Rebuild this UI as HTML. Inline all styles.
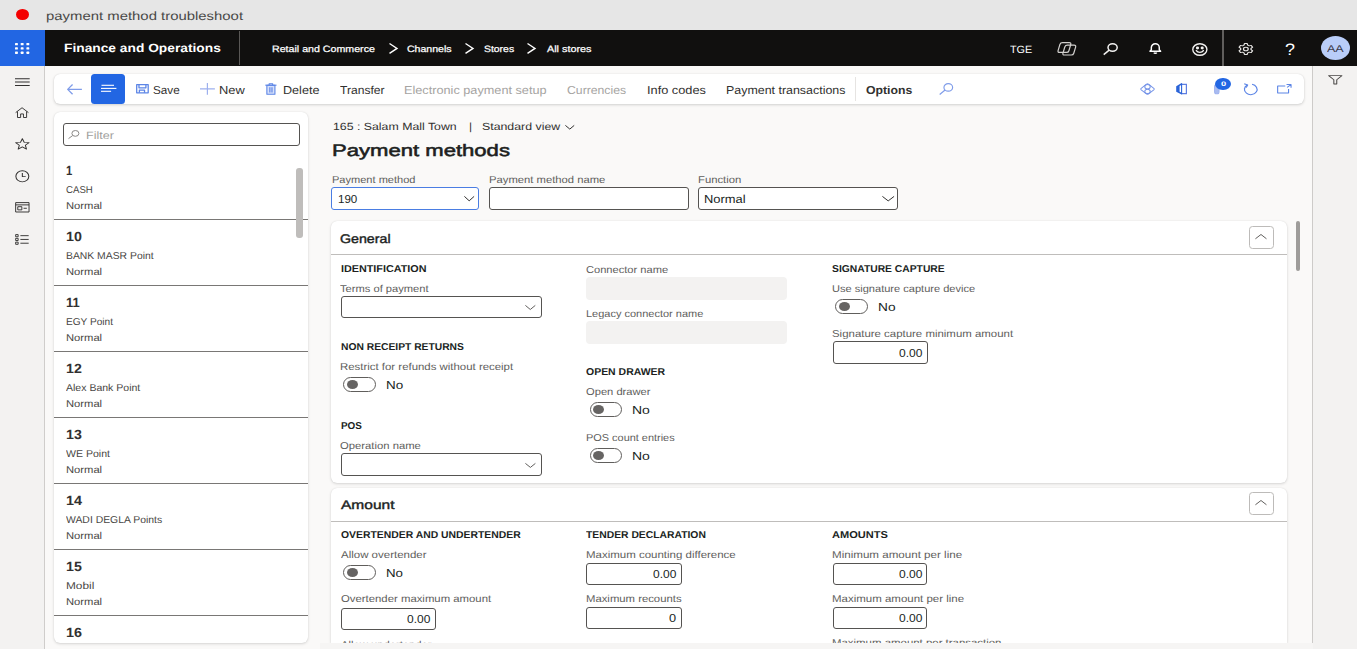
<!DOCTYPE html>
<html lang="en"><head><meta charset="utf-8"><title>payment method troubleshoot</title>
<style>
html,body{margin:0;padding:0;}
body{width:1357px;height:649px;overflow:hidden;position:relative;background:#faf9f8;font-family:"Liberation Sans", sans-serif;}
.t{position:absolute;white-space:pre;transform-origin:0 0;text-rendering:geometricPrecision;}
.a{position:absolute;box-sizing:border-box;}
svg{position:absolute;overflow:visible;}
.tg{width:32.8px;height:14.9px;border:1.4px solid #605e5c;border-radius:7.5px;background:#fff;}
.kn{width:11px;height:8.9px;border-radius:50%;background:#666463;}
.in{border:1px solid #555351;border-radius:3px;background:#fff;}
.ro{background:#f3f2f1;border-radius:4px;}
.card{background:#fff;border-radius:6px;box-shadow:0 1px 3px rgba(0,0,0,.14),0 0 1px rgba(0,0,0,.12);}
.hl{height:1px;background:#bfbdbb;}
.li{left:54px;width:254px;height:1px;background:#797775;}
</style></head><body>
<!-- title bar -->
<div class="a " style="left:0px;top:0px;width:1357.0px;height:30.0px;background:#e6e6e6;"></div>
<div class="a " style="left:16.3px;top:8.8px;width:13.0px;height:11.3px;border-radius:50%;background:#f40000;"></div>
<!-- nav bar -->
<div class="a " style="left:0px;top:30px;width:1357.0px;height:35.5px;background:#11100f;"></div>
<div class="a " style="left:0px;top:30px;width:45.0px;height:35.5px;background:#2266e3;"></div>
<svg style="left:15px;top:43px" width="14.3" height="10.9" viewBox="0 0 14.3 10.9"><g fill="#fff"><rect x="0" y="0" width="2.9" height="2.3" rx="0.6"/><rect x="0" y="4.3" width="2.9" height="2.3" rx="0.6"/><rect x="0" y="8.6" width="2.9" height="2.3" rx="0.6"/><rect x="5.7" y="0" width="2.9" height="2.3" rx="0.6"/><rect x="5.7" y="4.3" width="2.9" height="2.3" rx="0.6"/><rect x="5.7" y="8.6" width="2.9" height="2.3" rx="0.6"/><rect x="11.4" y="0" width="2.9" height="2.3" rx="0.6"/><rect x="11.4" y="4.3" width="2.9" height="2.3" rx="0.6"/><rect x="11.4" y="8.6" width="2.9" height="2.3" rx="0.6"/></g></svg>
<div class="a " style="left:239px;top:31px;width:1.2px;height:33.5px;background:#5a5856;"></div>
<!-- breadcrumb chevrons -->
<svg style="left:388.5px;top:43.2px" width="8.5" height="10.8" viewBox="0 0 8.5 10.8"><path d="M0.5 0.5 L8.0 5.4 L0.5 10.3" fill="none" stroke="#fff" stroke-width="1.4"/></svg>
<svg style="left:465px;top:43.2px" width="8.5" height="10.8" viewBox="0 0 8.5 10.8"><path d="M0.5 0.5 L8.0 5.4 L0.5 10.3" fill="none" stroke="#fff" stroke-width="1.4"/></svg>
<svg style="left:527px;top:43.2px" width="8.5" height="10.8" viewBox="0 0 8.5 10.8"><path d="M0.5 0.5 L8.0 5.4 L0.5 10.3" fill="none" stroke="#fff" stroke-width="1.4"/></svg>
<!-- nav right icons -->
<svg style="left:1056.7px;top:42.2px" width="19.5" height="13.7" viewBox="0 0 20 14" preserveAspectRatio="none"><g fill="none" stroke="#d2d0ce" stroke-width="1.25" vector-effect="non-scaling-stroke" stroke-linejoin="round"><path d="M5.6 0.7 H12.6 Q14.6 0.7 14.1 2.6 L12.2 8.9 Q11.7 10.7 9.7 10.7 H2.6 Q0.6 10.7 1.1 8.8 L3 2.5 Q3.6 0.7 5.6 0.7Z"/><path d="M10.6 3.3 H17.6 Q19.6 3.3 19.1 5.2 L17.2 11.5 Q16.7 13.3 14.7 13.3 H7.6 Q5.6 13.3 6.1 11.4 L8 5.1 Q8.6 3.3 10.6 3.3Z"/></g></svg>
<svg style="left:1103.4px;top:43px" width="15.0" height="12.1" viewBox="0 0 15 12" preserveAspectRatio="none"><g fill="none" stroke="#f3f2f1" stroke-width="1.5" vector-effect="non-scaling-stroke" stroke-linejoin="round"><ellipse cx="9.6" cy="4.4" rx="4.6" ry="3.7"/><path d="M6.2 7 L0.7 11.5"/></g></svg>
<svg style="left:1149.2px;top:43.3px" width="12.6" height="11.0" viewBox="0 0 13 11" preserveAspectRatio="none"><g fill="none" stroke="#fff" stroke-width="1.5" vector-effect="non-scaling-stroke" stroke-linejoin="round"><path d="M1 8.3 L2.4 6.8 V4.4 a4.1 3.6 0 0 1 8.2 0 V6.8 L12 8.3 Z"/><path d="M5 9.6 a1.6 1.1 0 0 0 3 0"/></g></svg>
<svg style="left:1192.1px;top:42.6px" width="15.7" height="13.0" viewBox="0 0 16 13" preserveAspectRatio="none"><g fill="none" stroke="#f3f2f1" stroke-width="1.4" vector-effect="non-scaling-stroke" stroke-linejoin="round"><ellipse cx="8" cy="6.5" rx="7.2" ry="5.8"/><path d="M4.4 7.6 a4 3.2 0 0 0 7.2 0" stroke-linecap="round"/><ellipse cx="5.6" cy="5" rx="0.9" ry="0.7" fill="#fff"/><ellipse cx="10.4" cy="5" rx="0.9" ry="0.7" fill="#fff"/></g></svg>
<div class="a " style="left:1222.3px;top:30px;width:1.5px;height:35.5px;background:#605e5c;"></div>
<svg style="left:1238.2px;top:43.1px" width="15.7" height="12.0" viewBox="0 0 16 16" preserveAspectRatio="none"><g fill="none" stroke="#e8e6e4" stroke-width="1.3" vector-effect="non-scaling-stroke" stroke-linejoin="round"><circle cx="8" cy="8" r="2.4"/><path d="M6.6 0.8 h2.8 l.5 2.1 l1.5 .9 l2.1-.6 l1.4 2.4 l-1.6 1.5 v1.8 l1.6 1.5 l-1.4 2.4 l-2.1-.6 l-1.5 .9 l-.5 2.1 h-2.8 l-.5-2.1 l-1.5-.9 l-2.1 .6 l-1.4-2.4 l1.6-1.5 v-1.8 l-1.6-1.5 l1.4-2.4 l2.1 .6 l1.5-.9 z"/></g></svg>
<div class="a " style="left:1320.9px;top:35.8px;width:29.1px;height:24.0px;border-radius:50%;background:#b9cdf8;"></div>
<!-- left sidebar -->
<div class="a " style="left:0px;top:65.5px;width:45.4px;height:583.5px;background:#f3f2f1;border-right:1.4px solid #cfcdcb;"></div>
<!-- right filter pane -->
<div class="a " style="left:1312.3px;top:65.5px;width:44.7px;height:583.5px;background:#f3f2f1;border-left:1.8px solid #cdcbc9;"></div>
<svg style="left:14.6px;top:78.3px" width="14.7" height="8.2" viewBox="0 0 17 10" preserveAspectRatio="none"><g fill="none" stroke="#323130" stroke-width="1.2" vector-effect="non-scaling-stroke" stroke-linejoin="round"><path d="M0 0.8 H17 M0 5 H17 M0 9.2 H17"/></g></svg>
<svg style="left:15.2px;top:107px" width="14.1" height="11.1" viewBox="0 0 17 15" preserveAspectRatio="none"><g fill="none" stroke="#323130" stroke-width="1.2" vector-effect="non-scaling-stroke" stroke-linejoin="round"><path d="M0.8 7.6 L8.5 1 L16.2 7.6 M3 6 V14.2 H6.8 V9.4 H10.2 V14.2 H14 V6"/></g></svg>
<svg style="left:15.2px;top:138.3px" width="14.7" height="11.7" viewBox="0 0 17 16" preserveAspectRatio="none"><g fill="none" stroke="#323130" stroke-width="1.2" vector-effect="non-scaling-stroke" stroke-linejoin="round"><path d="M8.5 1 L10.7 6 L16.2 6.4 L12 9.9 L13.3 15.2 L8.5 12.3 L3.7 15.2 L5 9.9 L0.8 6.4 L6.3 6 Z"/></g></svg>
<svg style="left:15.2px;top:169.9px" width="14.7" height="12.6" viewBox="0 0 17 17" preserveAspectRatio="none"><g fill="none" stroke="#323130" stroke-width="1.2" vector-effect="non-scaling-stroke" stroke-linejoin="round"><circle cx="8.5" cy="8.5" r="7.5"/><path d="M8.5 4 V9 H12.4"/></g></svg>
<svg style="left:15.2px;top:202.4px" width="14.7" height="10.6" viewBox="0 0 18 14" preserveAspectRatio="none"><g fill="none" stroke="#323130" stroke-width="1.2" vector-effect="non-scaling-stroke" stroke-linejoin="round"><rect x="0.8" y="0.8" width="16.4" height="12.4"/><path d="M0.8 3.8 H17.2"/><rect x="3.4" y="6.2" width="5" height="4.2"/><path d="M10.5 8.3 H14.5"/></g></svg>
<svg style="left:15.2px;top:234.3px" width="14.1" height="10.9" viewBox="0 0 17 15" preserveAspectRatio="none"><g fill="none" stroke="#323130" stroke-width="1.2" vector-effect="non-scaling-stroke" stroke-linejoin="round"><rect x="0.8" y="0.8" width="3" height="3"/><rect x="0.8" y="6" width="3" height="3"/><rect x="0.8" y="11.2" width="3" height="3"/><path d="M6.5 2.3 H16.5 M6.5 7.5 H16.5 M6.5 12.7 H16.5"/></g></svg>
<svg style="left:1328.2px;top:75px" width="14.6" height="9.7" viewBox="0 0 15 11" preserveAspectRatio="none"><g fill="none" stroke="#484644" stroke-width="1.05" vector-effect="non-scaling-stroke" stroke-linejoin="round"><path d="M0.7 0.7 H14.3 L9 5.4 V10.3 H6 V5.4 Z"/></g></svg>
<!-- toolbar -->
<div class="a " style="left:53.5px;top:73.6px;width:1250.8px;height:30.4px;background:#fff;border-radius:6px;box-shadow:0 1px 3px rgba(0,0,0,.16),0 0 1px rgba(0,0,0,.12);"></div>
<svg style="left:66.5px;top:83.7px" width="14.9" height="10.7" viewBox="0 0 15 11" preserveAspectRatio="none"><g fill="none" stroke="#7f9ce9" stroke-width="1.3" vector-effect="non-scaling-stroke" stroke-linejoin="round"><path d="M5.6 0.5 L0.7 5.5 L5.6 10.5 M0.7 5.5 H15"/></g></svg>
<div class="a " style="left:91px;top:73.8px;width:34.0px;height:30.2px;background:#2266e3;border-radius:3.5px;"></div>
<svg style="left:100.5px;top:84px" width="16" height="9" viewBox="0 0 16 9"><g stroke="#fff" stroke-width="1.1"><path d="M0.5 1.3 H13"/><path d="M0 4.4 H15.4"/><path d="M0 7.3 H10.1"/></g></svg>
<svg style="left:136px;top:84.2px" width="12.9" height="9.5" viewBox="0 0 13 10" preserveAspectRatio="none"><g fill="none" stroke="#5c85e6" stroke-width="1.3" vector-effect="non-scaling-stroke" stroke-linejoin="round"><rect x="0.7" y="0.7" width="11.6" height="8.6"/><path d="M3 0.7 V4 H10 V0.7"/><path d="M3.4 9.3 V6.4 H8.6 V9.3"/></g></svg>
<svg style="left:199.6px;top:83.1px" width="14.9" height="11.7" viewBox="0 0 14.9 11.7"><path d="M7.4 0 V11.7 M0 5.8 H14.9" stroke="#9db0ee" stroke-width="1.2"/></svg>
<svg style="left:265.1px;top:82.9px" width="11.8" height="11.9" viewBox="0 0 12 12" preserveAspectRatio="none"><g fill="none" stroke="#5c85e6" stroke-width="1.1" vector-effect="non-scaling-stroke" stroke-linejoin="round"><path d="M1.9 2.2 V11.3 H10.1 V2.2 Z" fill="#d6e0fa"/><path d="M0.3 2.2 H11.7"/><path d="M4.2 2.2 V0.7 H7.8 V2.2"/><path d="M4.9 4.2 V9.6 M7.1 4.2 V9.6" stroke="#7d9ceb" stroke-width="1.6"/></g></svg>
<div class="a " style="left:854.5px;top:76.5px;width:1.2px;height:24.5px;background:#e6e4e2;"></div>
<svg style="left:938.8px;top:82.6px" width="14.5" height="12.0" viewBox="0 0 15 12" preserveAspectRatio="none"><g fill="none" stroke="#7f9ce9" stroke-width="1.2" vector-effect="non-scaling-stroke" stroke-linejoin="round"><ellipse cx="9.6" cy="4.4" rx="4.5" ry="3.7"/><path d="M6.3 7 L0.7 11.5"/></g></svg>
<svg style="left:1140.4px;top:82.7px" width="15.0" height="12.1" viewBox="0 0 16 14" preserveAspectRatio="none"><g fill="none" stroke="#7795e8" stroke-width="1.1" vector-effect="non-scaling-stroke" stroke-linejoin="round"><path d="M6.9 1.4 Q8 0.4 9.1 1.4 L14.7 6.1 Q15.7 7 14.7 7.9 L9.1 12.6 Q8 13.6 6.9 12.6 L1.3 7.9 Q0.3 7 1.3 6.1 Z"/><ellipse cx="8" cy="4.3" rx="2.9" ry="2.5"/><ellipse cx="8" cy="9.7" rx="2.9" ry="2.5"/></g></svg>
<svg style="left:1176.3px;top:83px" width="11.1" height="11.4" viewBox="0 0 11.1 11.4"><path d="M0.2 3.2 L5.6 0 V1.8 L3.6 2.9 V8.8 L5.6 9.8 V11.4 L0.2 8.8 Z" fill="#2a63d8"/><path d="M5.6 1.3 H10.4 V10.6 H5.6" fill="none" stroke="#5f7fe2" stroke-width="1.2"/><path d="M5.6 0.3 V11.2" stroke="#2a63d8" stroke-width="1.1"/></svg>
<svg style="left:1214px;top:84.1px" width="5.6" height="10.4" viewBox="0 0 6 10" preserveAspectRatio="none"><g fill="none" stroke="#9db1ee" stroke-width="1" vector-effect="non-scaling-stroke" stroke-linejoin="round"><rect x="0.6" y="0.6" width="4.8" height="8.8" rx="2" fill="#a9bbf0"/></g></svg>
<div class="a " style="left:1215px;top:77.8px;width:16.1px;height:12.6px;border-radius:50%;background:#2266e3;"></div>
<svg style="left:1242.9px;top:82.7px" width="15.1" height="12.4" viewBox="0 0 15 15" preserveAspectRatio="none"><g fill="none" stroke="#5c85e6" stroke-width="1.2" vector-effect="non-scaling-stroke" stroke-linejoin="round"><path d="M4.4 2.4 A6.3 6.3 0 1 0 9 1.6"/><path d="M1.2 1 L4.6 2.4 L3.2 5.6"/></g></svg>
<svg style="left:1277.2px;top:83.9px" width="14.7" height="9.5" viewBox="0 0 16 12" preserveAspectRatio="none"><g fill="none" stroke="#5c85e6" stroke-width="1.2" vector-effect="non-scaling-stroke" stroke-linejoin="round"><path d="M9 2.6 H0.7 V11.3 H12.6 V6.4"/><path d="M10.4 0.7 H15.3 V4.6 M15.3 0.7 L11 4.2"/></g></svg>
<!-- list card -->
<div class="a card" style="left:54px;top:112px;width:254.0px;height:530.6px;"></div>
<div class="a in" style="left:63px;top:123.3px;width:237.0px;height:22.4px;"></div>
<svg style="left:68.2px;top:130.2px" width="11.5" height="9" viewBox="0 0 11.5 9"><g fill="none" stroke="#8a8886" stroke-width="1"><ellipse cx="7.4" cy="3.4" rx="3.5" ry="2.9"/><path d="M4.6 5.6 L0.5 8.6"/></g></svg>
<div class="a li" style="top:219px;"></div>
<div class="a li" style="top:285px;"></div>
<div class="a li" style="top:351px;"></div>
<div class="a li" style="top:417px;"></div>
<div class="a li" style="top:483px;"></div>
<div class="a li" style="top:549px;"></div>
<div class="a li" style="top:615px;"></div>
<div class="a " style="left:296.4px;top:167.5px;width:6.5px;height:70.3px;background:#bfbdbb;border-radius:3px;"></div>
<!-- view chevron -->
<svg style="left:564.7px;top:125px" width="9.6" height="4.6" viewBox="0 0 9.6 4.6"><path d="M0.4 0.4 L4.8 4.1 L9.2 0.4" fill="none" stroke="#323130" stroke-width="1"/></svg>
<!-- top fields -->
<div class="a in" style="left:331.3px;top:187.4px;width:148.1px;height:22.3px;border:1.5px solid #4a7de3;"></div>
<svg style="left:463.7px;top:196.2px" width="10.5" height="5.3" viewBox="0 0 10.5 5.3"><path d="M0.4 0.4 L5.2 4.8 L10.1 0.4" fill="none" stroke="#323130" stroke-width="1"/></svg>
<div class="a in" style="left:489.3px;top:187.4px;width:200.2px;height:22.3px;"></div>
<div class="a in" style="left:698px;top:187.4px;width:200.2px;height:22.3px;"></div>
<svg style="left:881.5px;top:196.2px" width="12.5" height="5.4" viewBox="0 0 12.5 5.4"><path d="M0.4 0.4 L6.2 4.9 L12.1 0.4" fill="none" stroke="#323130" stroke-width="1"/></svg>
<!-- main scrollbar -->
<div class="a " style="left:1295.5px;top:220.8px;width:4.5px;height:49.8px;background:#9e9c9a;border-radius:2.2px;"></div>
<!-- General card -->
<div class="a card" style="left:331px;top:220.5px;width:956.0px;height:262.7px;"></div>
<div class="a hl" style="left:331px;top:254px;width:956.0px;height:1.0px;"></div>
<div class="a in" style="left:1249.4px;top:226.2px;width:24.4px;height:22.6px;border:1.3px solid #bdbbb9;border-radius:3.5px;"></div>
<svg style="left:1255.3px;top:233.8px" width="11.9" height="5.2" viewBox="0 0 11.9 5.2"><path d="M0.4 4.8 L6.0 0.5 L11.5 4.8" fill="none" stroke="#605e5c" stroke-width="1"/></svg>
<div class="a in" style="left:341px;top:296.2px;width:200.5px;height:21.8px;"></div>
<svg style="left:524.6px;top:304.5px" width="10.7" height="5.0" viewBox="0 0 10.7 5.0"><path d="M0.4 0.4 L5.3 4.5 L10.3 0.4" fill="none" stroke="#605e5c" stroke-width="1"/></svg>
<div class="a ro" style="left:586.2px;top:276.8px;width:200.8px;height:23.0px;"></div>
<div class="a ro" style="left:586.2px;top:320.8px;width:200.8px;height:23.0px;"></div>
<div class="a in" style="left:341px;top:453.3px;width:200.5px;height:22.7px;"></div>
<svg style="left:524.8px;top:462.5px" width="10.8" height="4.9" viewBox="0 0 10.8 4.9"><path d="M0.4 0.4 L5.4 4.4 L10.4 0.4" fill="none" stroke="#605e5c" stroke-width="1"/></svg>
<div class="a in" style="left:832.5px;top:341.4px;width:95.1px;height:22.4px;"></div>
<!-- toggles -->
<div class="a tg" style="left:343.2px;top:377.0px;"></div><div class="a kn" style="left:347.0px;top:380.0px;"></div>
<div class="a tg" style="left:589.5px;top:402.2px;"></div><div class="a kn" style="left:593.3px;top:405.2px;"></div>
<div class="a tg" style="left:589.5px;top:448.1px;"></div><div class="a kn" style="left:593.3px;top:451.1px;"></div>
<div class="a tg" style="left:835px;top:299.0px;"></div><div class="a kn" style="left:838.8px;top:302.0px;"></div>
<!-- Amount card -->
<div class="a card" style="left:331px;top:487.8px;width:956.0px;height:155.4px;border-radius:6px 6px 0 0;"></div>
<div class="a hl" style="left:331px;top:520.7px;width:956.0px;height:1.0px;"></div>
<div class="a in" style="left:1249.4px;top:492px;width:24.4px;height:22.8px;border:1.3px solid #bdbbb9;border-radius:3.5px;"></div>
<svg style="left:1255.3px;top:499.8px" width="11.9" height="5.2" viewBox="0 0 11.9 5.2"><path d="M0.4 4.8 L6.0 0.5 L11.5 4.8" fill="none" stroke="#605e5c" stroke-width="1"/></svg>
<div class="a tg" style="left:343.2px;top:565.0px;"></div><div class="a kn" style="left:347.0px;top:568.0px;"></div>
<div class="a in" style="left:341.1px;top:608.1px;width:94.7px;height:21.7px;"></div>
<div class="a in" style="left:586.2px;top:563.3px;width:95.6px;height:21.3px;"></div>
<div class="a in" style="left:586.2px;top:607px;width:95.6px;height:21.8px;"></div>
<div class="a in" style="left:832.5px;top:563.3px;width:94.5px;height:21.3px;"></div>
<div class="a in" style="left:832.5px;top:607px;width:94.5px;height:21.8px;"></div>
<!-- bottom mask -->
<div class="a " style="left:320px;top:643.2px;width:992.5px;height:5.8px;background:#f6f5f4;z-index:5;"></div>

<span class="t" style="left:45.9px;top:8px;font-size:12px;line-height:16px;color:#4a4948;transform:scaleX(1.241);">payment method troubleshoot</span>
<span class="t" style="left:63.7px;top:40px;font-size:12px;line-height:16px;color:#ffffff;transform:scaleX(1.147);font-weight:700;">Finance and Operations</span>
<span class="t" style="left:272.4px;top:43px;font-size:9.2px;line-height:12px;color:#ffffff;transform:scaleX(1.158);-webkit-text-stroke:0.25px #fff;">Retail and Commerce</span>
<span class="t" style="left:407.4px;top:43px;font-size:9.2px;line-height:12px;color:#ffffff;transform:scaleX(1.149);-webkit-text-stroke:0.25px #fff;">Channels</span>
<span class="t" style="left:484.4px;top:43px;font-size:9.2px;line-height:12px;color:#ffffff;transform:scaleX(1.133);-webkit-text-stroke:0.25px #fff;">Stores</span>
<span class="t" style="left:547.0px;top:43px;font-size:9.2px;line-height:12px;color:#ffffff;transform:scaleX(1.177);-webkit-text-stroke:0.25px #fff;">All stores</span>
<span class="t" style="left:1010.0px;top:43px;font-size:10.5px;line-height:14px;color:#ffffff;transform:scaleX(1.028);">TGE</span>
<span class="t" style="left:1327.2px;top:43px;font-size:10px;line-height:13px;color:#3b3a4a;transform:scaleX(1.252);">AA</span>
<span class="t" style="left:1285.1px;top:40px;font-size:16.5px;line-height:21px;color:#ffffff;transform:scaleX(1.088);">?</span>
<span class="t" style="left:1220.5px;top:80px;font-size:6.6px;line-height:9px;color:#ffffff;transform:scaleX(1.416);font-weight:700;">0</span>
<span class="t" style="left:153.1px;top:84px;font-size:11.5px;line-height:15px;color:#323130;transform:scaleX(1.018);">Save</span>
<span class="t" style="left:218.7px;top:84px;font-size:11.5px;line-height:15px;color:#323130;transform:scaleX(1.117);">New</span>
<span class="t" style="left:283.0px;top:84px;font-size:11.5px;line-height:15px;color:#323130;transform:scaleX(1.095);">Delete</span>
<span class="t" style="left:339.8px;top:84px;font-size:11.5px;line-height:15px;color:#323130;transform:scaleX(1.052);">Transfer</span>
<span class="t" style="left:404.1px;top:84px;font-size:11.5px;line-height:15px;color:#a6a4a2;transform:scaleX(1.104);">Electronic payment setup</span>
<span class="t" style="left:567.0px;top:84px;font-size:11.5px;line-height:15px;color:#a6a4a2;transform:scaleX(1.063);">Currencies</span>
<span class="t" style="left:646.7px;top:84px;font-size:11.5px;line-height:15px;color:#323130;transform:scaleX(1.110);">Info codes</span>
<span class="t" style="left:726.2px;top:84px;font-size:11.5px;line-height:15px;color:#323130;transform:scaleX(1.080);">Payment transactions</span>
<span class="t" style="left:865.8px;top:84px;font-size:11.5px;line-height:15px;color:#323130;transform:scaleX(1.066);font-weight:700;">Options</span>
<span class="t" style="left:86.2px;top:129px;font-size:10.7px;line-height:14px;color:#a19f9d;transform:scaleX(1.171);">Filter</span>
<span class="t" style="left:66.1px;top:162px;font-size:13.3px;line-height:17px;color:#323130;transform:scaleX(0.851);font-weight:700;">1</span>
<span class="t" style="left:65.8px;top:184px;font-size:10px;line-height:13px;color:#484644;transform:scaleX(0.964);">CASH</span>
<span class="t" style="left:65.7px;top:200px;font-size:10px;line-height:13px;color:#484644;transform:scaleX(1.120);">Normal</span>
<span class="t" style="left:66.0px;top:228px;font-size:13.3px;line-height:17px;color:#323130;transform:scaleX(1.075);font-weight:700;">10</span>
<span class="t" style="left:65.8px;top:250px;font-size:10px;line-height:13px;color:#484644;transform:scaleX(1.037);">BANK MASR Point</span>
<span class="t" style="left:65.7px;top:266px;font-size:10px;line-height:13px;color:#484644;transform:scaleX(1.120);">Normal</span>
<span class="t" style="left:66.0px;top:294px;font-size:13.3px;line-height:17px;color:#323130;transform:scaleX(0.974);font-weight:700;">11</span>
<span class="t" style="left:65.8px;top:316px;font-size:10px;line-height:13px;color:#484644;transform:scaleX(1.010);">EGY Point</span>
<span class="t" style="left:65.7px;top:332px;font-size:10px;line-height:13px;color:#484644;transform:scaleX(1.120);">Normal</span>
<span class="t" style="left:66.0px;top:360px;font-size:13.3px;line-height:17px;color:#323130;transform:scaleX(1.068);font-weight:700;">12</span>
<span class="t" style="left:65.8px;top:382px;font-size:10px;line-height:13px;color:#484644;transform:scaleX(1.052);">Alex Bank Point</span>
<span class="t" style="left:65.7px;top:398px;font-size:10px;line-height:13px;color:#484644;transform:scaleX(1.120);">Normal</span>
<span class="t" style="left:66.0px;top:426px;font-size:13.3px;line-height:17px;color:#323130;transform:scaleX(1.068);font-weight:700;">13</span>
<span class="t" style="left:65.8px;top:448px;font-size:10px;line-height:13px;color:#484644;transform:scaleX(1.055);">WE Point</span>
<span class="t" style="left:65.7px;top:464px;font-size:10px;line-height:13px;color:#484644;transform:scaleX(1.120);">Normal</span>
<span class="t" style="left:66.0px;top:492px;font-size:13.3px;line-height:17px;color:#323130;transform:scaleX(1.081);font-weight:700;">14</span>
<span class="t" style="left:65.8px;top:514px;font-size:10px;line-height:13px;color:#484644;transform:scaleX(1.040);">WADI DEGLA Points</span>
<span class="t" style="left:65.7px;top:530px;font-size:10px;line-height:13px;color:#484644;transform:scaleX(1.120);">Normal</span>
<span class="t" style="left:66.0px;top:558px;font-size:13.3px;line-height:17px;color:#323130;transform:scaleX(1.068);font-weight:700;">15</span>
<span class="t" style="left:65.7px;top:580px;font-size:10px;line-height:13px;color:#484644;transform:scaleX(1.184);">Mobil</span>
<span class="t" style="left:65.7px;top:596px;font-size:10px;line-height:13px;color:#484644;transform:scaleX(1.120);">Normal</span>
<span class="t" style="left:66.0px;top:624px;font-size:13.3px;line-height:17px;color:#323130;transform:scaleX(1.081);font-weight:700;">16</span>
<span class="t" style="left:333.4px;top:121px;font-size:10.4px;line-height:14px;color:#323130;transform:scaleX(1.185);">165 : Salam Mall Town</span>
<span class="t" style="left:468.9px;top:121px;font-size:10.4px;line-height:14px;color:#323130;transform:scaleX(1.130);">|</span>
<span class="t" style="left:481.6px;top:121px;font-size:10.4px;line-height:14px;color:#323130;transform:scaleX(1.187);">Standard view</span>
<span class="t" style="left:332.3px;top:140px;font-size:16.7px;line-height:22px;color:#201f1e;transform:scaleX(1.323);-webkit-text-stroke:0.55px #201f1e;">Payment methods</span>
<span class="t" style="left:332.0px;top:174px;font-size:10px;line-height:13px;color:#605e5c;transform:scaleX(1.104);">Payment method</span>
<span class="t" style="left:488.7px;top:174px;font-size:10px;line-height:13px;color:#605e5c;transform:scaleX(1.125);">Payment method name</span>
<span class="t" style="left:697.7px;top:174px;font-size:10px;line-height:13px;color:#605e5c;transform:scaleX(1.129);">Function</span>
<span class="t" style="left:338.0px;top:192px;font-size:11.6px;line-height:15px;color:#201f1e;transform:scaleX(0.998);">190</span>
<span class="t" style="left:704.4px;top:192px;font-size:11.6px;line-height:15px;color:#201f1e;transform:scaleX(1.113);">Normal</span>
<span class="t" style="left:340.4px;top:231px;font-size:12.5px;line-height:16px;color:#201f1e;transform:scaleX(1.137);-webkit-text-stroke:0.4px #201f1e;">General</span>
<span class="t" style="left:340.5px;top:263px;font-size:10px;line-height:13px;color:#201f1e;transform:scaleX(1.079);font-weight:700;">IDENTIFICATION</span>
<span class="t" style="left:340.4px;top:283px;font-size:10px;line-height:13px;color:#605e5c;transform:scaleX(1.115);">Terms of payment</span>
<span class="t" style="left:586.3px;top:264px;font-size:10px;line-height:13px;color:#605e5c;transform:scaleX(1.110);">Connector name</span>
<span class="t" style="left:586.4px;top:308px;font-size:10px;line-height:13px;color:#605e5c;transform:scaleX(1.099);">Legacy connector name</span>
<span class="t" style="left:340.5px;top:341px;font-size:10px;line-height:13px;color:#201f1e;transform:scaleX(1.029);font-weight:700;">NON RECEIPT RETURNS</span>
<span class="t" style="left:340.4px;top:361px;font-size:10px;line-height:13px;color:#605e5c;transform:scaleX(1.141);">Restrict for refunds without receipt</span>
<span class="t" style="left:386.2px;top:378px;font-size:11.6px;line-height:15px;color:#201f1e;transform:scaleX(1.160);">No</span>
<span class="t" style="left:586.2px;top:366px;font-size:10px;line-height:13px;color:#201f1e;transform:scaleX(1.047);font-weight:700;">OPEN DRAWER</span>
<span class="t" style="left:586.3px;top:386px;font-size:10px;line-height:13px;color:#605e5c;transform:scaleX(1.116);">Open drawer</span>
<span class="t" style="left:631.6px;top:403px;font-size:11.6px;line-height:15px;color:#201f1e;transform:scaleX(1.207);">No</span>
<span class="t" style="left:340.5px;top:420px;font-size:10px;line-height:13px;color:#201f1e;transform:scaleX(0.989);font-weight:700;">POS</span>
<span class="t" style="left:340.4px;top:440px;font-size:10px;line-height:13px;color:#605e5c;transform:scaleX(1.128);">Operation name</span>
<span class="t" style="left:586.4px;top:432px;font-size:10px;line-height:13px;color:#605e5c;transform:scaleX(1.092);">POS count entries</span>
<span class="t" style="left:631.6px;top:449px;font-size:11.6px;line-height:15px;color:#201f1e;transform:scaleX(1.207);">No</span>
<span class="t" style="left:832.0px;top:263px;font-size:10px;line-height:13px;color:#201f1e;transform:scaleX(1.031);font-weight:700;">SIGNATURE CAPTURE</span>
<span class="t" style="left:831.9px;top:283px;font-size:10px;line-height:13px;color:#605e5c;transform:scaleX(1.105);">Use signature capture device</span>
<span class="t" style="left:878.0px;top:300px;font-size:11.6px;line-height:15px;color:#201f1e;transform:scaleX(1.180);">No</span>
<span class="t" style="left:831.9px;top:328px;font-size:10px;line-height:13px;color:#605e5c;transform:scaleX(1.143);">Signature capture minimum amount</span>
<span class="t" style="left:899.0px;top:346px;font-size:11.6px;line-height:15px;color:#201f1e;transform:scaleX(1.036);">0.00</span>
<span class="t" style="left:340.5px;top:497px;font-size:12.5px;line-height:16px;color:#201f1e;transform:scaleX(1.241);-webkit-text-stroke:0.4px #201f1e;">Amount</span>
<span class="t" style="left:340.6px;top:529px;font-size:10px;line-height:13px;color:#201f1e;transform:scaleX(1.039);font-weight:700;">OVERTENDER AND UNDERTENDER</span>
<span class="t" style="left:340.5px;top:549px;font-size:10px;line-height:13px;color:#605e5c;transform:scaleX(1.148);">Allow overtender</span>
<span class="t" style="left:386.1px;top:566px;font-size:11.6px;line-height:15px;color:#201f1e;transform:scaleX(1.146);">No</span>
<span class="t" style="left:340.5px;top:593px;font-size:10px;line-height:13px;color:#605e5c;transform:scaleX(1.135);">Overtender maximum amount</span>
<span class="t" style="left:407.3px;top:612px;font-size:11.6px;line-height:15px;color:#201f1e;transform:scaleX(1.032);">0.00</span>
<span class="t" style="left:340.5px;top:639px;font-size:10px;line-height:13px;color:#605e5c;transform:scaleX(1.123);">Allow undertender</span>
<span class="t" style="left:586.3px;top:529px;font-size:10px;line-height:13px;color:#201f1e;transform:scaleX(1.034);font-weight:700;">TENDER DECLARATION</span>
<span class="t" style="left:586.2px;top:549px;font-size:10px;line-height:13px;color:#605e5c;transform:scaleX(1.148);">Maximum counting difference</span>
<span class="t" style="left:653.4px;top:567px;font-size:11.6px;line-height:15px;color:#201f1e;transform:scaleX(1.032);">0.00</span>
<span class="t" style="left:586.2px;top:593px;font-size:10px;line-height:13px;color:#605e5c;transform:scaleX(1.131);">Maximum recounts</span>
<span class="t" style="left:668.9px;top:611px;font-size:11.6px;line-height:15px;color:#201f1e;transform:scaleX(1.100);">0</span>
<span class="t" style="left:831.9px;top:529px;font-size:10px;line-height:13px;color:#201f1e;transform:scaleX(1.106);font-weight:700;">AMOUNTS</span>
<span class="t" style="left:831.9px;top:549px;font-size:10px;line-height:13px;color:#605e5c;transform:scaleX(1.159);">Minimum amount per line</span>
<span class="t" style="left:898.5px;top:567px;font-size:11.6px;line-height:15px;color:#201f1e;transform:scaleX(1.036);">0.00</span>
<span class="t" style="left:831.9px;top:593px;font-size:10px;line-height:13px;color:#605e5c;transform:scaleX(1.148);">Maximum amount per line</span>
<span class="t" style="left:898.5px;top:611px;font-size:11.6px;line-height:15px;color:#201f1e;transform:scaleX(1.036);">0.00</span>
<span class="t" style="left:831.9px;top:637px;font-size:10px;line-height:13px;color:#605e5c;transform:scaleX(1.142);">Maximum amount per transaction</span>
</body></html>
